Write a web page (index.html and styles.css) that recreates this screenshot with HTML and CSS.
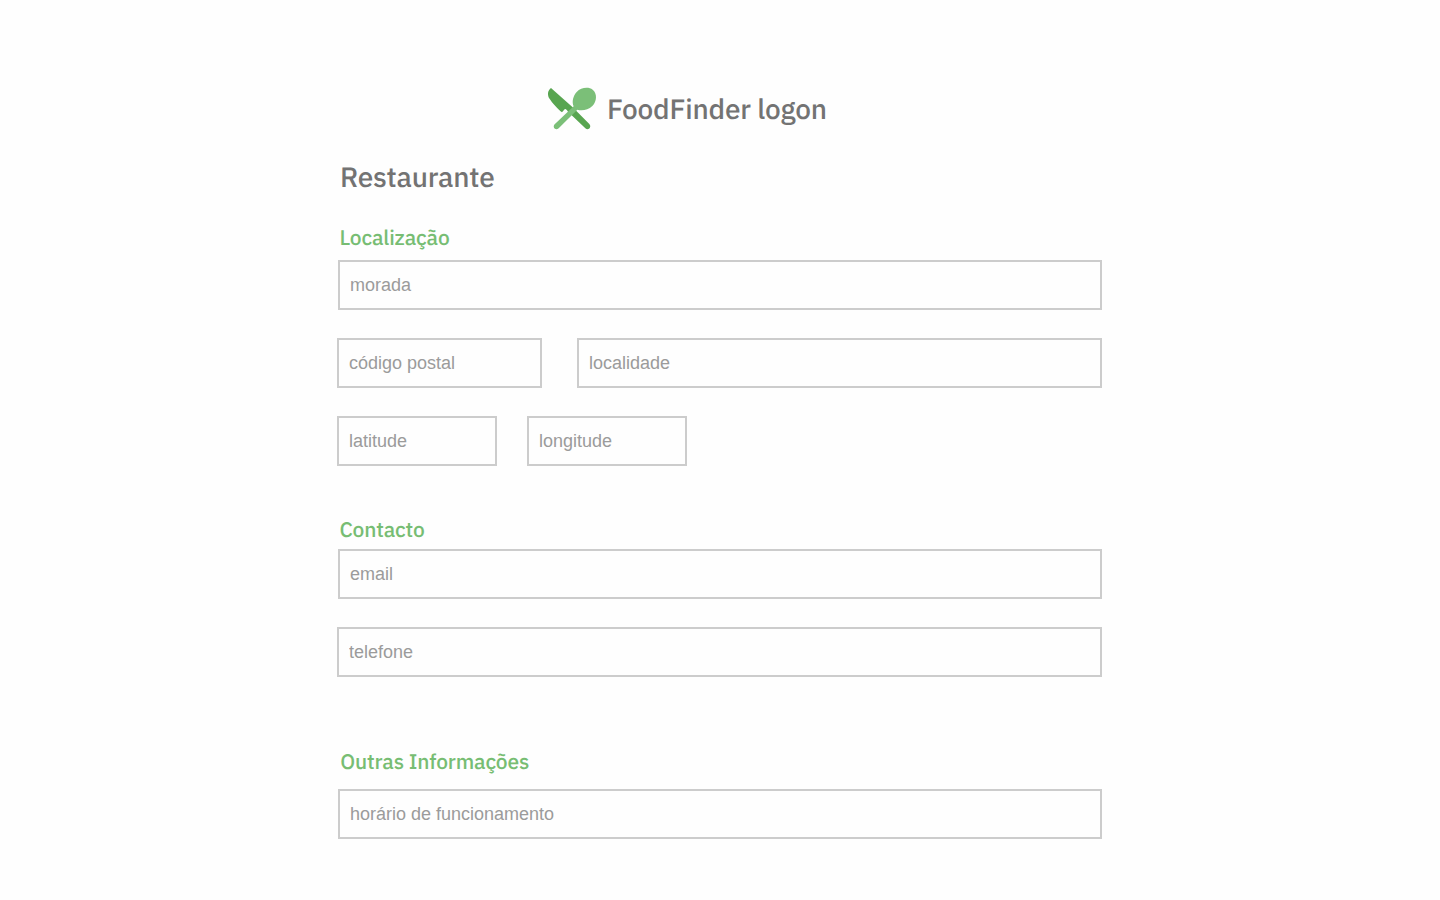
FILE: index.html
```html
<!DOCTYPE html>
<html lang="pt">
<head>
<meta charset="utf-8">
<title>FoodFinder logon</title>
<link rel="stylesheet" href="styles.css">
</head>
<body>
<main class="page">
  <header class="brand">
    <svg class="logo" viewBox="0 0 192 168" aria-hidden="true">
      <path fill="#58a550" d="M33 24L98 82L148 132C156 141 145 153 136 145L84 95C80 88 76 86 74 88L66 97C56 90 36 68 27 54C22 43 23 32 33 24Z"/>
      <path fill="#7bbf78" d="M101 79C95 66 99 48 110 36C123 22 146 20 158 29C172 40 171 64 157 78C144 90 126 94 112 89L56 145C47 153 36 142 44 133Z"/>
    </svg>
    <h1 class="brand-name">FoodFinder logon</h1>
  </header>
  <form class="form">
    <h2 class="title">Restaurante</h2>
    <section class="group location">
      <h3 class="heading">Localização</h3>
      <div class="row inset"><input class="field" placeholder="morada"></div>
      <div class="row postal-row"><input class="field postal" placeholder="código postal"><input class="field" placeholder="localidade"></div>
      <div class="row coords"><input class="field coord" placeholder="latitude"><input class="field coord" placeholder="longitude"></div>
    </section>
    <section class="group contact">
      <h3 class="heading">Contacto</h3>
      <div class="row inset"><input class="field" placeholder="email"></div>
      <div class="row"><input class="field" placeholder="telefone"></div>
    </section>
    <section class="group other">
      <h3 class="heading">Outras Informações</h3>
      <div class="row inset"><input class="field" placeholder="horário de funcionamento"></div>
    </section>
  </form>
</main>
</body>
</html>
```
FILE: styles.css
```css
* { box-sizing: border-box; }
body { margin: 0; background: #fefefe; }
.page { width: 765px; height: 900px; margin-left: 337px; padding-top: 80px; overflow: hidden; }
h1, h2, h3 { margin: 0; font-family: "IBM Plex Sans", Roboto, sans-serif; font-weight: 500; white-space: nowrap; text-rendering: geometricPrecision; }
.brand { display: flex; height: 56px; padding-left: 203px; }
.logo { width: 64px; height: 56px; flex: none; }
.brand-name { padding-left: 3px; font-size: 28px; line-height: 58px; letter-spacing: -0.19px; color: #737373; }
.title { height: 40px; margin-top: 21px; padding-left: 3px; font-size: 28px; line-height: 40px; letter-spacing: -0.19px; color: #737373; }
.group { display: flex; flex-direction: column; gap: 28px; }
.heading { height: 30px; padding-left: 2.4px; font-size: 21px; line-height: 28px; letter-spacing: -0.16px; color: #77bd73; }
.location { margin-top: 26px; }
.location .heading { margin-bottom: -21px; }
.contact { margin-top: 49px; }
.contact .heading { margin-bottom: -24px; }
.other { margin-top: 70px; }
.other .heading { padding-left: 3.3px; margin-bottom: -16px; }
.row { display: flex; height: 50px; }
.inset { padding-left: 1px; }
.postal-row { gap: 35px; }
.coords { gap: 30px; }
.field { flex: 1; min-width: 0; height: 50px; margin: 0; padding: 0 10px; border: 2px solid #ccc; border-radius: 0; background: #fefefe; font: 18px "Liberation Sans", Arial, sans-serif; color: #555; outline: none; }
.field::placeholder { color: #9b9b9b; opacity: 1; }
.postal { flex: 0 0 205px; }
.coord { flex: 0 0 160px; }
```
